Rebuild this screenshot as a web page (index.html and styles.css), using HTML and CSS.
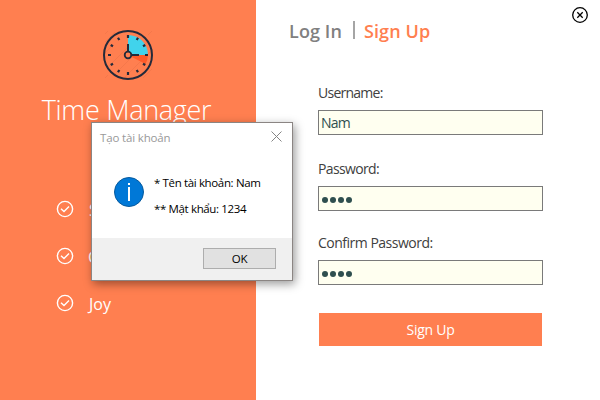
FILE: index.html
```html
<!DOCTYPE html>
<html lang="vi">
<head>
<meta charset="utf-8">
<title>Time Manager</title>
<link rel="stylesheet" href="styles.css">
</head>
<body>
<div class="window">
  <aside class="brand">
    <svg class="clock" viewBox="0 0 50 50" width="50" height="50">
      <path d="M2 4L5 1M2 12L12 2M0 25L9 16M4 38L38 4M12 44L44 12M22 47L47 22M40 48L49 39M2 48L5 45M45 5L49 1" stroke="#ef7448" stroke-width=".6"/>
      <path d="M25 25V5A20 20 0 0 1 45 25Z" fill="#41d3ec"/>
      <path d="M25 25H45A20 20 0 0 1 42.500 34Z" fill="#ff5b29"/>
      <circle cx="25" cy="25" r="24" fill="none" stroke="#242a3a" stroke-width="2"/>
      <g stroke="#242a3a" stroke-width="2.200">
        <path d="M25 5v3M25 42v3M5 25h3M42 25h3M15 7.700l1.300 2.300M35 7.700l-1.300 2.300M7.700 15l2.300 1.300M42.300 15l-2.300 1.300M7.700 35l2.300-1.300M42.300 35l-2.300-1.300M15 42.300l1.300-2.300M35 42.300l-1.300-2.300"/>
        <path d="M25 22V14M28 25H36" stroke-width="2"/>
        <circle cx="25" cy="25" r="3.300" fill="#ff7f50" stroke-width="1.800"/>
      </g>
    </svg>
    <h1 class="title">Time Manager</h1>
    <ul class="features">
      <li><svg viewBox="0 0 18 18" width="18" height="18"><circle cx="9" cy="9" r="7.600"/><path d="M5 8.700l3 2.800 5-5"/></svg><span>S</span></li>
      <li><svg viewBox="0 0 18 18" width="18" height="18"><circle cx="9" cy="9" r="7.600"/><path d="M5 8.700l3 2.800 5-5"/></svg><span class="nudge">C</span></li>
      <li><svg viewBox="0 0 18 18" width="18" height="18"><circle cx="9" cy="9" r="7.600"/><path d="M5 8.700l3 2.800 5-5"/></svg><span>Joy</span></li>
    </ul>
  </aside>
  <main class="account">
    <header class="top">
      <nav class="tabs"><span class="tab">Log In</span><i class="divider"></i><span class="tab active">Sign Up</span></nav>
      <svg class="exit" viewBox="0 0 16 16" width="16" height="16"><circle cx="8" cy="8" r="7.300"/><path class="cross" d="M5.300 5.300l5.400 5.400M10.700 5.300l-5.400 5.400"/></svg>
    </header>
    <form class="form">
      <div class="group"><label class="w-user">Username:</label><div class="field">Nam</div></div>
      <div class="group second"><label class="w-pass">Password:</label><div class="field"><span class="dots"><i></i><i></i><i></i><i></i></span></div></div>
      <div class="group third"><label class="w-confirm">Confirm Password:</label><div class="field"><span class="dots"><i></i><i></i><i></i><i></i></span></div></div>
      <button class="submit" type="button">Sign Up</button>
    </form>
  </main>
  <section class="dialog">
    <header class="dialog-head"><span>Tạo tài khoản</span><svg viewBox="0 0 11 11" width="11" height="11"><path d="M.5.5l10 10M10.500.5l-10 10"/></svg></header>
    <div class="dialog-body">
      <svg class="info" viewBox="0 0 30 30" width="30" height="30"><circle cx="15" cy="15" r="14.500" fill="#0078d7" stroke="#075a9d"/><path d="M14 6h2v2h-2zM14 10h2v14h-2z" fill="#fff"/></svg>
      <div class="message"><p class="m-name">* Tên tài khoản: Nam</p><p class="m-pass">** Mật khẩu: 1234</p></div>
    </div>
    <footer class="dialog-foot"><button class="ok" type="button">OK</button></footer>
  </section>
</div>
</body>
</html>
```
FILE: styles.css
```css
* { box-sizing: border-box; }
body { margin: 0; font-family: "Open Sans", "Noto Sans", sans-serif; }
.window { position: relative; display: flex; width: 600px; height: 400px; background: #fff; overflow: hidden; }
.brand { width: 256px; background: #ff7f50; color: #fff; display: flex; flex-direction: column; align-items: center; padding-top: 30px; }
.clock { display: block; }
.title { margin: 12px 0 0; padding-right: 3px; font-size: 27px; line-height: 36px; font-weight: 300; letter-spacing: -.3px; white-space: nowrap; }
.features { list-style: none; align-self: flex-start; margin: 72px 0 0; padding: 0 0 0 56px; display: flex; flex-direction: column; gap: 29px; font-size: 16px; line-height: 18px; }
.features li { display: flex; height: 18px; gap: 15px; }
.features span { padding-top: 1px; }
.features .nudge { margin-left: -1px; }
.features svg { fill: none; stroke: #fff; stroke-width: 1.4; }
.account { flex: 1; }
.top { display: flex; justify-content: space-between; padding: 7px 12px 0 33px; height: 86px; }
.tabs { display: flex; padding-top: 12px; height: 36px; font-size: 18px; line-height: 24px; font-weight: 600; color: gray; white-space: nowrap; letter-spacing: .1px; }
.tab.active { color: #ff7f50; }
.divider { width: 2px; height: 18px; margin: 2px 9px 0 11px; background: #a5a5a5; }
.exit { fill: none; stroke: #000; stroke-width: 1.3; }
.exit .cross { stroke-width: 1.3; }
.form { padding-left: 62px; }
.group { height: 49px; }
.second { margin-top: 27px; }
.third { margin-top: 25px; }
label { display: block; height: 24px; font-size: 14px; line-height: 14px; color: #404040; white-space: nowrap; }
.w-user { letter-spacing: -.75px; }
.w-pass { letter-spacing: -.65px; }
.w-confirm { letter-spacing: -.5px; }
.field { display: flex; align-items: center; width: 225px; height: 25px; padding-left: 2px; border: 1px solid #7a7a7a; background: #fffff0; color: #2f4f4f; font-size: 14px; line-height: 22px; letter-spacing: -.8px; }
.dots { display: flex; gap: 2px; padding: 3px 0 0 1px; }
.dots i { width: 6px; height: 6px; border-radius: 50%; background: #2f4f4f; }
.submit { display: block; width: 223px; height: 33px; margin: 28px 0 0 1px; padding: 0; border: 0; background: #ff7f50; color: #fff; font: 14px/33px "Open Sans", sans-serif; letter-spacing: -.25px; }
.dialog { position: absolute; left: 91px; top: 122px; width: 202px; height: 159px; border: 1px solid #8b8583; background: #fff; box-shadow: 2px 3px 9px rgba(0,0,0,.4); font-size: 11.5px; color: #000; }
.dialog-head { height: 29px; display: flex; justify-content: space-between; padding: 8px 10px 0 8px; line-height: 14px; color: #999; letter-spacing: -.15px; }
.dialog-head svg { fill: none; stroke: #858585; }
.dialog-body { height: 86px; display: flex; padding: 25px 0 0 22px; gap: 10px; }
.message { margin-top: -1px; }
.message p { margin: 0; height: 26px; line-height: 14px; white-space: nowrap; letter-spacing: -.36px; }
.dialog-foot { height: 42px; display: flex; justify-content: flex-end; padding: 10px 16px 0 0; background: #f0f0f0; }
.ok { width: 73px; height: 21px; padding: 0; border: 1px solid #adadad; background: #e1e1e1; color: #000; font: 11.5px/19px "Open Sans", sans-serif; letter-spacing: -.3px; }
```
